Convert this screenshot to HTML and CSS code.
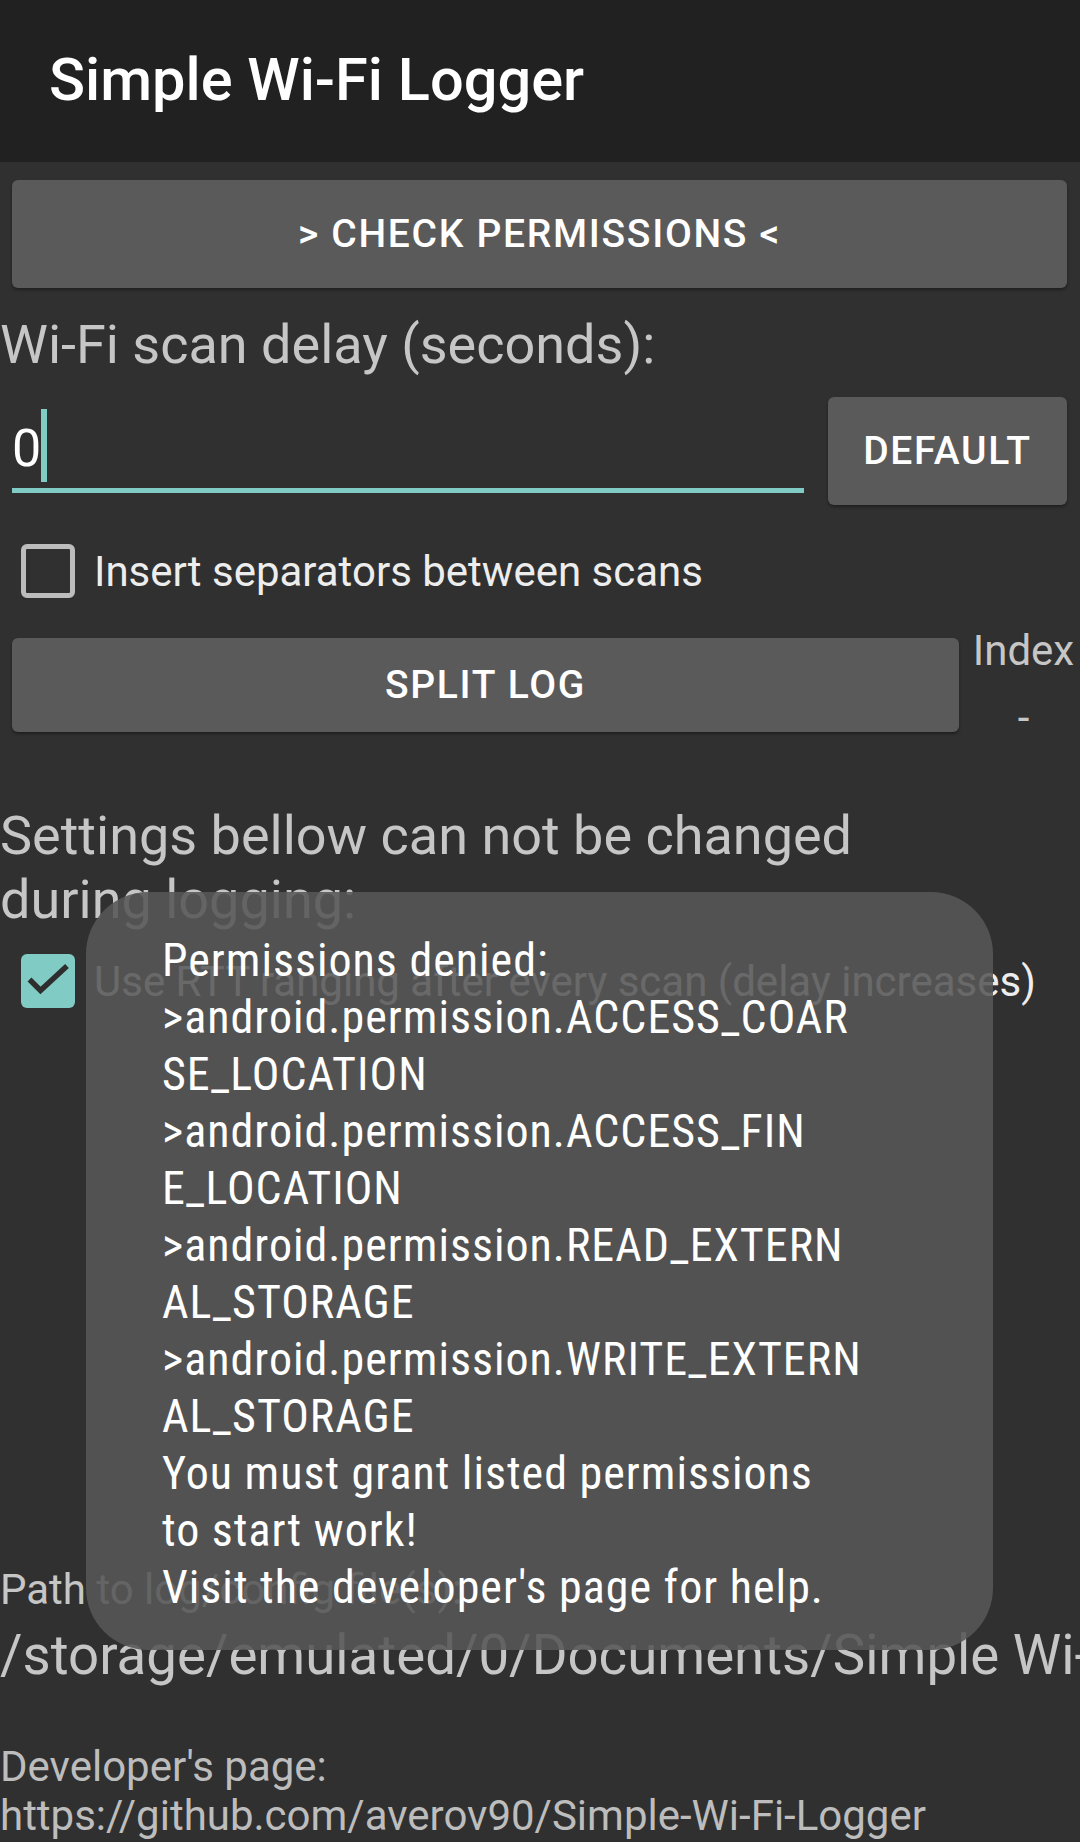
FILE: index.html
```html
<!DOCTYPE html>
<html lang="en">
<head>
<meta charset="utf-8">
<title>Simple Wi-Fi Logger</title>
<link rel="stylesheet" href="styles.css">
</head>
<body>
<div class="app">
  <header class="toolbar"><h1 class="title">Simple Wi-Fi Logger</h1></header>
  <main class="content">
    <button class="btn btn-check">&gt; CHECK PERMISSIONS &lt;</button>
    <div class="label label-delay">Wi-Fi scan delay (seconds):</div>
    <div class="delay-row">
      <div class="edit"><span class="edit-text">0</span><span class="cursor"></span></div>
      <button class="btn btn-default">DEFAULT</button>
    </div>
    <div class="check-row check-sep">
      <span class="box"></span>
      <span class="check-text">Insert separators between scans</span>
    </div>
    <div class="split-row">
      <button class="btn btn-split">SPLIT LOG</button>
      <div class="index-col"><span class="index-title">Index</span><span class="index-value">-</span></div>
    </div>
    <div class="label label-settings">Settings bellow can not be changed<br>during logging:</div>
    <div class="check-row check-rtt">
      <span class="box box-on"><svg viewBox="0 0 54 54" width="54" height="54"><path d="M8.5 25.5L19.5 36.5L46 12" fill="none" stroke="#2e2e2e" stroke-width="5.5" stroke-linecap="butt" stroke-linejoin="miter"/></svg></span>
      <span class="check-text">Use RTT ranging after every scan (delay increases)</span>
    </div>
    <div class="path-label">Path to log/config file(s):</div>
    <div class="path-value">/storage/emulated/0/Documents/Simple Wi-Fi Logger</div>
    <div class="dev">Developer's page:<br>https://github.com/averov90/Simple-Wi-Fi-Logger</div>
  </main>
  <div class="toast">
    <div class="toast-text">
      <div>Permissions denied:</div>
      <div>&gt;android.permission.ACCESS_COAR</div>
      <div>SE_LOCATION</div>
      <div>&gt;android.permission.ACCESS_FIN</div>
      <div>E_LOCATION</div>
      <div>&gt;android.permission.READ_EXTERN</div>
      <div>AL_STORAGE</div>
      <div>&gt;android.permission.WRITE_EXTERN</div>
      <div>AL_STORAGE</div>
      <div>You must grant listed permissions</div>
      <div>to start work!</div>
      <div>Visit the developer's page for help.</div>
    </div>
  </div>
</div>
</body>
</html>
```
FILE: styles.css
```css
* { box-sizing: border-box; }
html, body { margin: 0; padding: 0; }
body {
  background: #303030;
  font-family: Roboto, "Noto Sans", sans-serif;
  color: #c6c6c6;
}
.app {
  position: relative;
  width: 1080px;
  height: 1842px;
  overflow: hidden;
  background: #303030;
}
.toolbar {
  height: 162px;
  background: #212121;
  padding-left: 49px;
  padding-top: 46px;
}
.title {
  margin: 0;
  font-size: 59.5px;
  font-weight: 500;
  line-height: 68px;
  color: #ffffff;
}
.content { display: flex; flex-direction: column; }
.btn {
  border: none;
  background: #5a5a5b;
  color: #ffffff;
  font-family: Roboto, sans-serif;
  font-weight: 500;
  font-size: 39px;
  letter-spacing: 1.7px;
  border-radius: 6px;
  box-shadow: 0 2px 3px rgba(0,0,0,0.35);
  padding: 0;
}
.btn-check {
  margin: 18px 13px 0 12px;
  height: 108px;
}
.label {
  font-size: 54px;
  line-height: 64px;
  color: #c6c6c6;
}
.label-delay { margin-top: 25px; }
.delay-row {
  display: flex;
  gap: 24px;
  margin: 20px 13px 0 12px;
}
.edit {
  position: relative;
  flex: 1;
  height: 96px;
  padding-top: 21px;
  border-bottom: 5px solid #80cbc4;
  font-size: 52px;
  line-height: 62px;
  color: #ffffff;
}
.cursor {
  position: absolute;
  left: 29px;
  top: 12px;
  width: 6px;
  height: 73px;
  background: #80cbc4;
}
.btn-default { width: 239px; height: 108px; }
.check-row {
  display: flex;
  align-items: center;
  margin-left: 21px;
}
.check-sep { margin-top: 39px; }
.box {
  flex: none;
  width: 54px;
  height: 54px;
  border: 5px solid #bdbdbd;
  border-radius: 6px;
  display: flex;
  align-items: center;
  justify-content: center;
}
.box-on { background: #80cbc4; border: none; }
.box-on svg { display: block; }
.check-text {
  margin-left: 19px;
  font-size: 42px;
  line-height: 49px;
  color: #ededed;
  white-space: nowrap;
}
.split-row {
  display: flex;
  margin-top: 28px;
}
.btn-split {
  width: 947px;
  height: 94px;
  margin: 12px 0 0 12px;
}
.index-col {
  flex: 1;
  margin-left: 8px;
  display: flex;
  flex-direction: column;
  align-items: center;
  font-size: 42px;
  line-height: 49px;
  color: #c6c6c6;
}
.index-value { margin-top: 18px; }
.label-settings { margin-top: 62px; }
.check-rtt { margin-top: 22px; }
.path-label {
  margin-top: 557px;
  font-size: 42px;
  line-height: 49px;
  color: #c6c6c6;
}
.path-value {
  margin-top: 9px;
  font-size: 54.6px;
  line-height: 64px;
  color: #c6c6c6;
  white-space: nowrap;
  overflow: hidden;
}
.dev {
  margin-top: 55px;
  font-size: 42px;
  line-height: 49px;
  color: #bdbdbd;
  white-space: nowrap;
}
.toast {
  position: absolute;
  left: 86px;
  top: 892px;
  width: 907px;
  height: 758px;
  border-radius: 62px;
  background: rgba(87, 87, 87, 0.88);
  padding: 40px 0 0 76px;
}
.toast-text {
  font-size: 46px;
  line-height: 57px;
  font-stretch: 84%;
  letter-spacing: 1px;
  color: #ffffff;
  white-space: nowrap;
}
```
